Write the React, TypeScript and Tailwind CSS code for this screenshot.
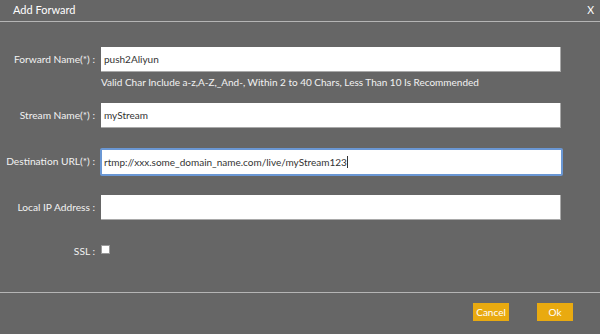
import React from "react";

const font = { fontFamily: 'Lato, "Open Sans", sans-serif' };

function Label({ children }: { children: React.ReactNode }) {
  return (
    <div className="w-[95px] shrink-0 flex justify-end">
      <label className="whitespace-nowrap text-[10.2px] text-[#f2f2f2]">{children}</label>
    </div>
  );
}

function Row({ label, value, focused, hint, className }: { label: string; value?: string; focused?: boolean; hint?: string; className?: string }) {
  return (
    <div className={className}>
      <div className="flex items-center">
        <Label>{label}</Label>
        {focused ? (
          <div className="ml-[5px] w-[463px] h-[28px] rounded-[2px] border-2 border-[#6a97d4] bg-white flex items-center pl-[2px] text-[10px] text-[#333]">
            <span>{value}</span>
            <span className="inline-block w-px h-[12px] bg-[#333]" />
          </div>
        ) : (
          <div className="ml-[6px] w-[460px] h-[25px] bg-white border-b border-r border-[#a9a9a9] flex items-center pl-[3px] text-[10px] text-[#333]">
            {value}
          </div>
        )}
      </div>
      {hint && <div className="ml-[101px] mt-[4px] text-[10px] leading-[13px] text-[#f2f2f2] whitespace-nowrap">{hint}</div>}
    </div>
  );
}

export default function App() {
  return (
    <div className="w-[600px] h-[334px] bg-[#666666] flex flex-col overflow-hidden" style={font}>
      <div className="h-[21px] flex items-center justify-between pl-[13px] pr-[6px] text-[11px] text-white border-b border-[#b5b5b5] box-content">
        <span>Add Forward</span>
        <span className="text-[10.5px]">X</span>
      </div>
      <div className="flex-1 flex flex-col">
        <Row className="mt-[25px]" label="Forward Name(*) :" value="push2Aliyun" hint="Valid Char Include a-z,A-Z,_And-, Within 2 to 40 Chars, Less Than 10 Is Recommended" />
        <Row className="mt-[14px]" label="Stream Name(*) :" value="myStream" />
        <Row className="mt-[20px]" label="Destination URL(*) :" value="rtmp://xxx.some_domain_name.com/live/myStream123" focused />
        <Row className="mt-[19px]" label="Local IP Address :" value="" />
        <div className="mt-[24px] flex items-center">
          <Label>SSL :</Label>
          <span className="ml-[6px] -mt-[4px] w-[9px] h-[9px] bg-white border border-[#999]" />
        </div>
      </div>
      <div className="border-t border-[#b5b5b5] h-[42px] flex items-start justify-end pt-[10px] pr-[27px] gap-[28px]">
        <button className="w-[36px] h-[18px] bg-[#e9aa10] text-white text-[10px] leading-none">Cancel</button>
        <button className="w-[36px] h-[18px] bg-[#e9aa10] text-white text-[10px] leading-none">Ok</button>
      </div>
    </div>
  );
}
